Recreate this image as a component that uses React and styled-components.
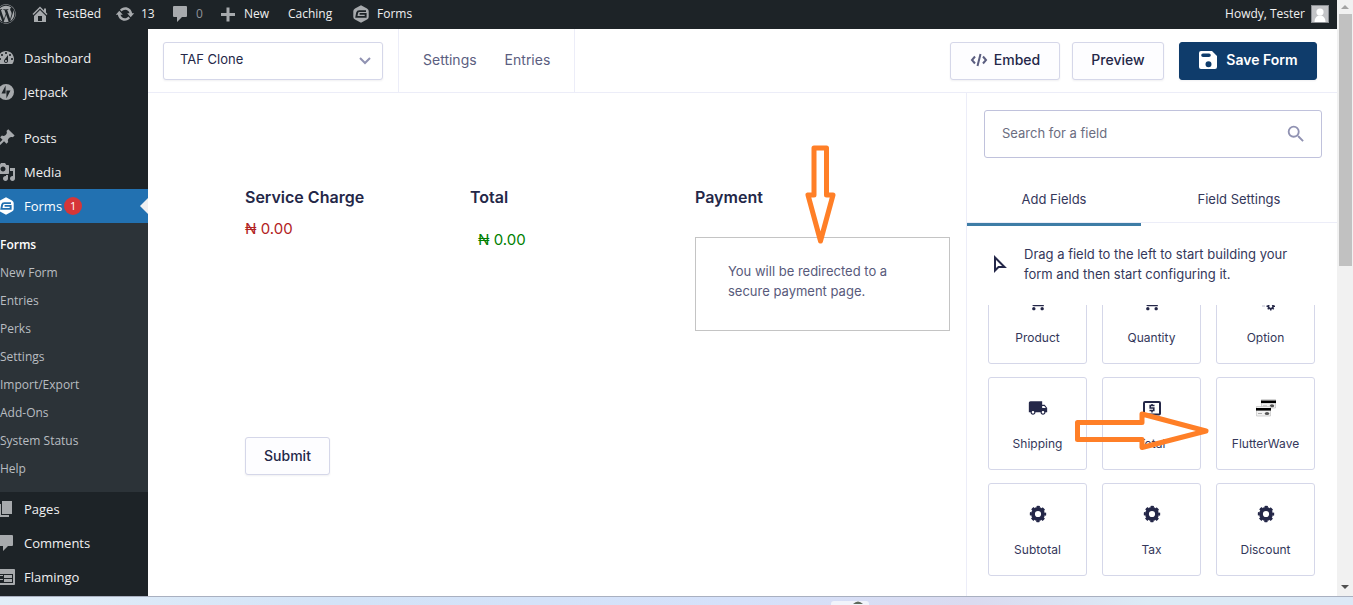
import React from "react";
import styled, { createGlobalStyle, css } from "styled-components";
import { FaWordpress } from "react-icons/fa";
import { MdSearch, MdLocalShipping, MdShoppingCart } from "react-icons/md";

const GlobalStyle = createGlobalStyle`
  *, *::before, *::after { box-sizing: border-box; }
  body { margin: 0; background: #fff; }
  button, input, select { font: inherit; color: inherit; margin: 0; }
  a { color: inherit; text-decoration: none; }
  svg { display: block; flex: none; }
`;

const wpFont = `"Open Sans", "Noto Sans", sans-serif`;
const uiFont = `Inter, "Liberation Sans", sans-serif`;

const Desktop = styled.div`
  display: grid;
  grid-template-rows: minmax(0, 1fr) 9px;
  height: 100vh;
  font-family: ${uiFont};
  color: #242748;
`;

const Browser = styled.div`
  display: grid;
  grid-template-columns: minmax(0, 1fr) 16px;
  min-height: 0;
`;

const Page = styled.div`
  display: grid;
  grid-template-rows: 29px minmax(0, 1fr);
  overflow: hidden;
`;

const AdminBar = styled.header`
  display: flex;
  align-items: center;
  justify-content: space-between;
  padding-right: 8px;
  padding-bottom: 2px;
  background: #1d2327;
  color: #f0f0f1;
  font: 12px/20px ${wpFont};
`;

const BarLinks = styled.nav`
  display: grid;
  grid-template-columns: 30px 85px 55px 48px 70px 63px auto;
`;

const BarLink = styled.a`
  display: flex;
  align-items: center;
  gap: 6px;
  white-space: nowrap;
  color: ${(p) => (p.$muted ? "#8f9499" : "inherit")};
  svg { color: #a7aaad; }
`;

const LogoLink = styled(BarLink)`
  margin-left: -4px;
`;

const Avatar = styled.svg`
  width: 18px;
  height: 18px;
  border: 1px solid #8c8f94;
  background: #c3c4c7;
`;

const Workspace = styled.div`
  display: grid;
  grid-template-columns: 148px minmax(0, 1fr);
  min-height: 0;
`;

const SideMenu = styled.nav`
  padding-top: 12px;
  overflow: hidden;
  background: #1d2327;
  color: #f0f0f1;
  font: 13px/34px ${wpFont};
`;

const MenuLink = styled.a`
  display: flex;
  align-items: center;
  gap: 8px;
  height: 34px;
  position: relative;
  margin-top: ${(p) => (p.$spaced ? "12px" : "0")};
  svg { margin-left: -4px; color: #a7aaad; }
  ${(p) =>
    p.$active &&
    css`
      background: #2271b1;
      color: #fff;
      svg { color: #fff; }
      &::after {
        content: "";
        position: absolute;
        right: 0;
        top: 9px;
        border: 8px solid transparent;
        border-left-width: 0;
        border-right-color: #f0f0f1;
      }
    `}
`;

const Count = styled.span`
  width: 18px;
  margin-left: -6px;
  border-radius: 9px;
  background: #d63638;
  font-size: 11px;
  line-height: 18px;
  text-align: center;
`;

const SubMenu = styled.div`
  padding: 8px 0 9px;
  background: #2c3338;
`;

const SubLink = styled.a`
  display: block;
  font-size: 12px;
  line-height: 28px;
  color: ${(p) => (p.$current ? "#fff" : "#b9bdc1")};
  font-weight: ${(p) => (p.$current ? 600 : 400)};
`;

const Editor = styled.main`
  display: grid;
  grid-template-rows: 64px minmax(0, 1fr);
  min-height: 0;
`;

const Toolbar = styled.div`
  display: flex;
  align-items: center;
  padding: 0 20px 0 15px;
  border-bottom: 1px solid #ecedf8;
  font-size: 14px;
`;

const FormPicker = styled.label`
  position: relative;
  width: 220px;
  margin-right: 15px;
  svg {
    position: absolute;
    right: 12px;
    top: 15px;
    color: #9092b2;
    pointer-events: none;
  }
`;

const PickerSelect = styled.select`
  display: block;
  width: 100%;
  height: 38px;
  padding: 0 16px 4px;
  appearance: none;
  background: #fff;
  border: 1px solid #d5d7e9;
  border-radius: 3px;
  box-shadow: 0 1px 2px #24274812;
  font-size: 13px;
`;

const ToolbarLinks = styled.nav`
  display: flex;
  align-items: center;
  gap: 28px;
  height: 63px;
  padding: 0 24px 2px;
  border: solid #ecedf8;
  border-width: 0 1px;
  color: #5b5e80;
`;

const Actions = styled.div`
  display: flex;
  margin-left: auto;
`;

const Button = styled.button`
  display: inline-flex;
  align-items: center;
  justify-content: center;
  gap: 6px;
  min-width: ${(p) => p.$width};
  height: 38px;
  padding: 0 0 2px;
  border: 1px solid #d5d7e9;
  border-radius: 3px;
  background: #fdfdff;
  box-shadow: 0 1px 2px #24274812;
  font-size: 14px;
  font-weight: 500;
  color: #242748;
  & + & { margin-left: 12px; }
`;

const SaveButton = styled(Button)`
  && { margin-left: 15px; }
  gap: 8px;
  border-color: #0f3c6b;
  background: #0f3c6b;
  color: #fff;
  font-weight: 600;
`;

const EditorBody = styled.div`
  display: grid;
  grid-template-columns: minmax(0, 1fr) 371px;
  min-height: 0;
`;

const Canvas = styled.section`
  padding: 94px 16px 0 97px;
`;

const FieldRow = styled.div`
  display: grid;
  grid-template-columns: 15fr 15fr 17fr;
  min-height: 250px;
`;

const Field = styled.div`
  position: relative;
`;

const FieldTitle = styled.h2`
  margin: 0;
  font-size: 16px;
  line-height: 20px;
  font-weight: 600;
`;

const Amount = styled.div`
  margin: ${(p) => (p.$inset ? "23px 0 0 8px" : "12px 0 0")};
  font-size: 15px;
  line-height: 20px;
  color: ${(p) => (p.$inset ? "#008000" : "#b22222")};
`;

const PaymentBox = styled.div`
  margin-top: 30px;
  padding: 23px 32px 29px;
  border: 1px solid #c4c4c4;
  font-size: 13px;
  line-height: 20px;
  color: #585a7b;
  p { margin: 0; max-width: 176px; }
`;

const DownArrow = styled.svg`
  position: absolute;
  left: 108px;
  top: -44px;
`;

const Panel = styled.aside`
  display: flex;
  flex-direction: column;
  min-height: 0;
  padding-top: 17px;
  border-left: 1px solid #ecedf8;
  font-size: 13px;
  color: #34375a;
`;

const SearchBox = styled.label`
  display: flex;
  align-items: center;
  justify-content: space-between;
  height: 48px;
  margin: 0 15px 0 17px;
  padding: 0 14px 0 17px;
  border: 1px solid #c0c2dc;
  border-radius: 3px;
  svg { color: #9092b2; }
`;

const SearchInput = styled.input`
  flex: 1;
  min-width: 0;
  padding: 0 0 2px;
  border: 0;
  outline: 0;
  background: none;
  &::placeholder { color: #6b6d80; opacity: 1; }
`;

const Tabs = styled.div`
  display: grid;
  grid-template-columns: 174fr 196fr;
  height: 68px;
`;

const Tab = styled.button`
  height: 68px;
  padding: 17px 0 0;
  border: 0;
  background: linear-gradient(#ecedf8, #ecedf8) 0 64px / 100% 1px no-repeat;
  border-bottom: 3px solid ${(p) => (p.$active ? "#3e7da6" : "transparent")};
`;

const Hint = styled.div`
  display: flex;
  align-items: center;
  gap: 17px;
  padding: 18px 26px 21px 25px;
  line-height: 20px;
  p { margin: 0; max-width: 280px; }
`;

const FieldList = styled.div`
  position: relative;
  flex: 1;
  min-height: 0;
  overflow: hidden;
`;

const FieldGrid = styled.div`
  display: grid;
  grid-template-columns: repeat(3, 1fr);
  gap: 13px 15px;
  margin: -34px 22px 0 21px;
`;

const FieldCard = styled.button`
  display: flex;
  flex-direction: column;
  align-items: center;
  height: 93px;
  padding: 20px 0 0;
  gap: 16px;
  border: 1px solid #d5d7e9;
  border-radius: 3px;
  background: #fff;
  font-size: 12px;
  line-height: 20px;
  svg { color: #242748; }
`;

const RightArrow = styled.svg`
  position: absolute;
  left: 108px;
  top: 104px;
`;

const ScrollTrack = styled.div`
  display: flex;
  flex-direction: column;
  align-items: center;
  padding: 4px 0 6px;
  background: #f1f1f1;
`;

const ScrollThumb = styled.div`
  width: 13px;
  height: 43%;
  margin: 5px 0 auto;
  background: #c1c1c1;
`;

const Taskbar = styled.footer`
  display: flex;
  align-items: flex-end;
  border-top: 1px solid #a9b0c0;
  background: linear-gradient(90deg, #e2eef8, #d3e3f7 25%, #d5e1fa 55%, #dadbf0 72%, #dcebf6 85%, #dce8f6);
`;

const TaskApp = styled.div`
  display: flex;
  justify-content: center;
  width: 38px;
  height: 4px;
  margin-left: 61.4%;
  padding-left: 16px;
  border-radius: 3px 3px 0 0;
  background: #f1f4fb;
`;

const Glyph = ({ d, size = 20, box = "0 0 20 20" }) => (
  <svg width={size} height={size} viewBox={box} fill="currentColor" fillRule="evenodd" aria-hidden="true">
    <path d={d} />
  </svg>
);

const paths = {
  home: "M16 8.5l1.53 1.53-1.06 1.06L10 4.6l-6.47 6.49-1.06-1.06L10 2.5l4 4v-2h2v4zm-6-2.46l6 5.99V18H4v-5.97zM12 17v-5H8v5h4z",
  update: "M10.2 3.28c3.53 0 6.43 2.61 6.92 6h2.08l-3.5 4-3.5-4h2.32c-.45-1.97-2.21-3.45-4.32-3.45-1.45 0-2.73.71-3.54 1.78L4.95 5.66C6.23 4.2 8.11 3.28 10.2 3.28zm-.4 13.44c-3.52 0-6.43-2.61-6.92-6H.8l3.5-4c1.17 1.33 2.33 2.67 3.5 4H5.48c.45 1.97 2.21 3.45 4.32 3.45 1.45 0 2.73-.71 3.54-1.78l1.71 1.95c-1.28 1.46-3.15 2.38-5.25 2.38z",
  comments: "M5 2h11q1 0 1 1v9q0 1-1 1h-4l-5 5v-5H4q-1 0-1-1V3q0-1 1-1z",
  plus: "M17 9v3h-5.500v5.500h-3V12H3V9h5.500V3.500h3V9z",
  dashboard: "M3.76 16h12.480c1.100-1.370 1.760-3.110 1.760-5 0-4.420-3.580-8-8-8s-8 3.580-8 8c0 1.890.660 3.630 1.760 5zM10 4c.550 0 1 .450 1 1s-.450 1-1 1-1-.450-1-1 .450-1 1-1zM6 6c.550 0 1 .450 1 1s-.450 1-1 1-1-.450-1-1 .450-1 1-1zm8 0c.550 0 1 .450 1 1s-.450 1-1 1-1-.450-1-1 .450-1 1-1zm-5.370 5.550L12 7v6c0 1.100-.900 2-2 2s-2-.900-2-2c0-.570.240-1.080.630-1.450zM4 10c.550 0 1 .450 1 1s-.450 1-1 1-1-.450-1-1 .450-1 1-1zm12 0c.550 0 1 .450 1 1s-.450 1-1 1-1-.450-1-1 .450-1 1-1zm-5 3c0-.550-.450-1-1-1s-1 .450-1 1 .450 1 1 1 1-.450 1-1z",
  jetpack: "M10 2a8 8 0 1 0 0 16a8 8 0 0 0 0-16zM9.600 11.500H5.500L9.600 3.600zM10.400 16.400V8.500h4.100z",
  pin: "M10.44 3.02l1.82-1.82 6.36 6.35-1.83 1.82c-1.05-.68-2.48-.57-3.41.36l-.75.75c-.92.93-1.04 2.35-.35 3.41l-1.83 1.82-2.41-2.41-2.8 2.79c-.42.42-3.38 2.71-3.8 2.29s1.86-3.39 2.28-3.81l2.79-2.79L4.1 9.36l1.83-1.82c1.05.69 2.48.57 3.4-.36l.75-.75c.93-.92 1.05-2.35.36-3.41z",
  media: "M13 11V4c0-.55-.45-1-1-1h-1.67L9 1H5L3.67 3H2c-.55 0-1 .45-1 1v7c0 .55.45 1 1 1h10c.55 0 1-.45 1-1zM7 4.500c1.380 0 2.500 1.120 2.500 2.500S8.380 9.500 7 9.500 4.500 8.380 4.500 7 5.620 4.500 7 4.500zM14 6h5v10.500c0 1.380-1.120 2.500-2.500 2.500S14 17.880 14 16.500s1.120-2.500 2.500-2.500c.170 0 .340.020.500.050V9h-3V6zm-4 8.050V13h2v3.500c0 1.380-1.120 2.500-2.500 2.500S7 17.880 7 16.500 8.120 14 9.500 14c.170 0 .340.020.500.050z",
  page: "M6 15V2h10v13H6zm-1 1h8v2H3V5h2v11z",
  feedback: "M2 2h16c.55 0 1 .45 1 1v14c0 .55-.45 1-1 1H2c-.55 0-1-.45-1-1V3c0-.55.45-1 1-1zm15 14V7H3v9h14zM4 8v1h3V8H4zm4 0v3h8V8H8zm-4 4v1h3v-1H4zm4 0v3h8v-3H8z",
  gravity: "M10 1.200l6 3.300q1.700 1 1.700 2.600v5.800q0 1.600-1.700 2.600l-6 3.300-6-3.300q-1.700-1-1.700-2.600V7.100q0-1.600 1.700-2.600zM15 6.200H8.200Q5.800 6.200 5.200 8.600L4.200 13.800H15.600V9H8.600V10.800H13.700V12H6.500L7.100 9Q7.300 8 8.400 8H15z",
  smallGear: "M18 12h-2.18c-.17.7-.44 1.35-.81 1.93l1.54 1.54-2.1 2.1-1.54-1.54c-.58.36-1.23.63-1.91.79V19H8v-2.18c-.68-.16-1.33-.43-1.91-.79l-1.54 1.54-2.12-2.12 1.54-1.54c-.36-.58-.63-1.23-.79-1.91H1V9.03h2.17c.16-.7.44-1.35.8-1.94L2.43 5.55l2.1-2.1 1.54 1.54c.58-.37 1.24-.64 1.93-.81V2h3v2.18c.68.16 1.33.43 1.91.79l1.54-1.54 2.12 2.12-1.54 1.54c.36.59.64 1.24.8 1.94H18V12zm-8.5 1.5c1.66 0 3-1.34 3-3s-1.34-3-3-3-3 1.34-3 3 1.34 3 3 3z",
  save: "M2 1h12l5 5v11q0 2-2 2H3q-2 0-2-2V3q0-2 2-2zM5 3.500a1.800 1.800 0 0 0 0 3.600h6a1.800 1.800 0 0 0 0-3.600zM10.500 11.200a3 3 0 1 0 0 6a3 3 0 0 0 0-6z",
};

const GearIcon = () => (
  <svg width="20" height="20" viewBox="0 0 20 20" fill="none" stroke="currentColor" aria-hidden="true">
    <circle cx="10" cy="10" r="5" strokeWidth="3.800" />
    <circle cx="10" cy="10" r="7.200" strokeWidth="2" strokeDasharray="3.200 2.455" strokeDashoffset="1.600" />
  </svg>
);

const CodeIcon = () => (
  <svg width="18" height="14" viewBox="0 0 18 14" fill="none" stroke="#5b5e80" strokeWidth="2">
    <path d="M5 3.500L2 7l3 3.500M13 3.500L16 7l-3 3.500M10.500 1l-3 12" />
  </svg>
);

const MoneyIcon = () => (
  <svg width="20" height="20" viewBox="0 0 20 20" fill="none" stroke="#242748">
    <rect x="2" y="4" width="16" height="12.500" rx="1" strokeWidth="2" />
    <path d="M12.500 7.500H8.200v2.500h3.600v2.500H7.500M10 6v1.500M10 12.500V14.500" strokeWidth="1.600" />
  </svg>
);

const CardsIcon = () => (
  <svg width="20" height="20" viewBox="0 0 20 20">
    <path d="M5.500 1.500h14v8.500h-14z" fill="#f2f2f2" stroke="#bbb" strokeWidth=".6" />
    <path d="M5 2.500h15v2.600H5z" fill="#000" />
    <path d="M7 8h4" stroke="#aaa" />
    <ellipse cx="16" cy="7.700" rx="2.200" ry="1.500" fill="#555" />
    <path d="M.500 8.500h14v9.500H.500z" fill="#f2f2f2" stroke="#bbb" strokeWidth=".6" />
    <path d="M0 10h15v2.600H0z" fill="#000" />
    <path d="M2 15.500h4" stroke="#aaa" />
    <ellipse cx="11" cy="15.500" rx="2.200" ry="1.500" fill="#555" />
  </svg>
);

const OptionIcon = () => (
  <svg width="20" height="20" viewBox="0 0 20 20" fill="#242748">
    <path d="M2 4h14v2H2zM2 9h8v2H2z" />
    <path d="M6 14h3" stroke="#b8bacb" />
    <g transform="translate(10 9) scale(.5)"><path fillRule="evenodd" d={paths.smallGear} /></g>
  </svg>
);

const topMenu = [
  { label: "Dashboard", icon: "dashboard" },
  { label: "Jetpack", icon: "jetpack" },
  { label: "Posts", icon: "pin", spaced: true },
  { label: "Media", icon: "media" },
  { label: "Forms", icon: "gravity", active: true, count: 1 },
];
const subMenu = ["Forms", "New Form", "Entries", "Perks", "Settings", "Import/Export", "Add-Ons", "System Status", "Help"];
const bottomMenu = [
  { label: "Pages", icon: "page" },
  { label: "Comments", icon: "comments" },
  { label: "Flamingo", icon: "feedback" },
];
const fields = [
  ["Product", <MdShoppingCart size={20} />],
  ["Quantity", <MdShoppingCart size={20} />],
  ["Option", <OptionIcon />],
  ["Shipping", <MdLocalShipping size={20} />],
  ["Total", <MoneyIcon />],
  ["FlutterWave", <CardsIcon />],
  ["Subtotal", <GearIcon />],
  ["Tax", <GearIcon />],
  ["Discount", <GearIcon />],
];

const MenuItem = ({ item }) => (
  <MenuLink href="#" $active={item.active} $spaced={item.spaced}>
    <Glyph d={paths[item.icon]} />
    {item.label}
    {item.count && <Count>{item.count}</Count>}
  </MenuLink>
);

export default function App() {
  return (
    <Desktop>
      <GlobalStyle />
      <Browser>
        <Page>
          <AdminBar>
            <BarLinks>
              <LogoLink href="#" aria-label="WordPress"><FaWordpress size={20} /></LogoLink>
              <BarLink href="#"><Glyph d={paths.home} />TestBed</BarLink>
              <BarLink href="#"><Glyph d={paths.update} />13</BarLink>
              <BarLink href="#" $muted><Glyph d={paths.comments} />0</BarLink>
              <BarLink href="#"><Glyph d={paths.plus} />New</BarLink>
              <BarLink href="#">Caching</BarLink>
              <BarLink href="#"><Glyph d={paths.gravity} />Forms</BarLink>
            </BarLinks>
            <BarLink href="#">
              Howdy, Tester
              <Avatar viewBox="0 0 16 16" fill="#fff">
                <circle cx="8" cy="6" r="3.600" />
                <path d="M2.500 16q0-5 4-6.500h3q4 1.500 4 6.500z" />
              </Avatar>
            </BarLink>
          </AdminBar>
          <Workspace>
            <SideMenu>
              {topMenu.map((item) => <MenuItem key={item.label} item={item} />)}
              <SubMenu>
                {subMenu.map((label, i) => <SubLink key={label} href="#" $current={i === 0}>{label}</SubLink>)}
              </SubMenu>
              {bottomMenu.map((item) => <MenuItem key={item.label} item={item} />)}
            </SideMenu>
            <Editor>
              <Toolbar>
                <FormPicker>
                  <PickerSelect aria-label="Form"><option>TAF Clone</option></PickerSelect>
                  <svg width="12" height="8" viewBox="0 0 12 8" fill="none" stroke="currentColor" strokeWidth="2">
                    <path d="M1 1l5 5 5-5" />
                  </svg>
                </FormPicker>
                <ToolbarLinks>
                  <a href="#">Settings</a>
                  <a href="#">Entries</a>
                </ToolbarLinks>
                <Actions>
                  <Button $width="110px"><CodeIcon />Embed</Button>
                  <Button $width="92px">Preview</Button>
                  <SaveButton $width="138px"><Glyph d={paths.save} />Save Form</SaveButton>
                </Actions>
              </Toolbar>
              <EditorBody>
                <Canvas>
                  <FieldRow>
                    <Field>
                      <FieldTitle>Service Charge</FieldTitle>
                      <Amount>₦ 0.00</Amount>
                    </Field>
                    <Field>
                      <FieldTitle>Total</FieldTitle>
                      <Amount $inset>₦ 0.00</Amount>
                    </Field>
                    <Field>
                      <FieldTitle>Payment</FieldTitle>
                      <PaymentBox><p>You will be redirected to a secure payment page.</p></PaymentBox>
                      <DownArrow width="34" height="104" fill="none" stroke="#ff7f27" strokeWidth="5" strokeLinejoin="round">
                        <path d="M11 5H23.500V52H30L17.500 98L5 52H11Z" />
                      </DownArrow>
                    </Field>
                  </FieldRow>
                  <Button $width="85px">Submit</Button>
                </Canvas>
                <Panel>
                  <SearchBox>
                    <SearchInput type="search" aria-label="Search for a field" placeholder="Search for a field" />
                    <MdSearch size={22} />
                  </SearchBox>
                  <Tabs role="tablist">
                    <Tab role="tab" aria-selected="true" $active>Add Fields</Tab>
                    <Tab role="tab" aria-selected="false">Field Settings</Tab>
                  </Tabs>
                  <Hint>
                    <svg width="15" height="18" viewBox="0 0 15 18" fill="none" stroke="#242748" strokeWidth="2">
                      <path d="M3 2.500v13l3.500-3.500h6z" />
                    </svg>
                    <p>Drag a field to the left to start building your form and then start configuring it.</p>
                  </Hint>
                  <FieldList>
                    <FieldGrid>
                      {fields.map(([label, icon]) => <FieldCard key={label}>{icon}{label}</FieldCard>)}
                    </FieldGrid>
                    <RightArrow width="140" height="46" fill="none" stroke="#ff7f27" strokeWidth="5" strokeLinejoin="round">
                      <path d="M2.500 13.500H67V5L131 22L67 38.500V30.500H2.500Z" />
                    </RightArrow>
                  </FieldList>
                </Panel>
              </EditorBody>
            </Editor>
          </Workspace>
        </Page>
        <ScrollTrack aria-hidden="true">
          <svg width="8" height="5" viewBox="0 0 8 5" fill="#a3a3a3"><path d="M0 5l4-4 4 4z" /></svg>
          <ScrollThumb />
          <svg width="8" height="5" viewBox="0 0 8 5" fill="#505050"><path d="M0 0l4 4 4-4z" /></svg>
        </ScrollTrack>
      </Browser>
      <Taskbar>
        <TaskApp>
          <svg width="10" height="3" viewBox="0 0 10 3"><path d="M0 3q5-5 10 0z" fill="#5e6a5c" /></svg>
        </TaskApp>
      </Taskbar>
    </Desktop>
  );
}
